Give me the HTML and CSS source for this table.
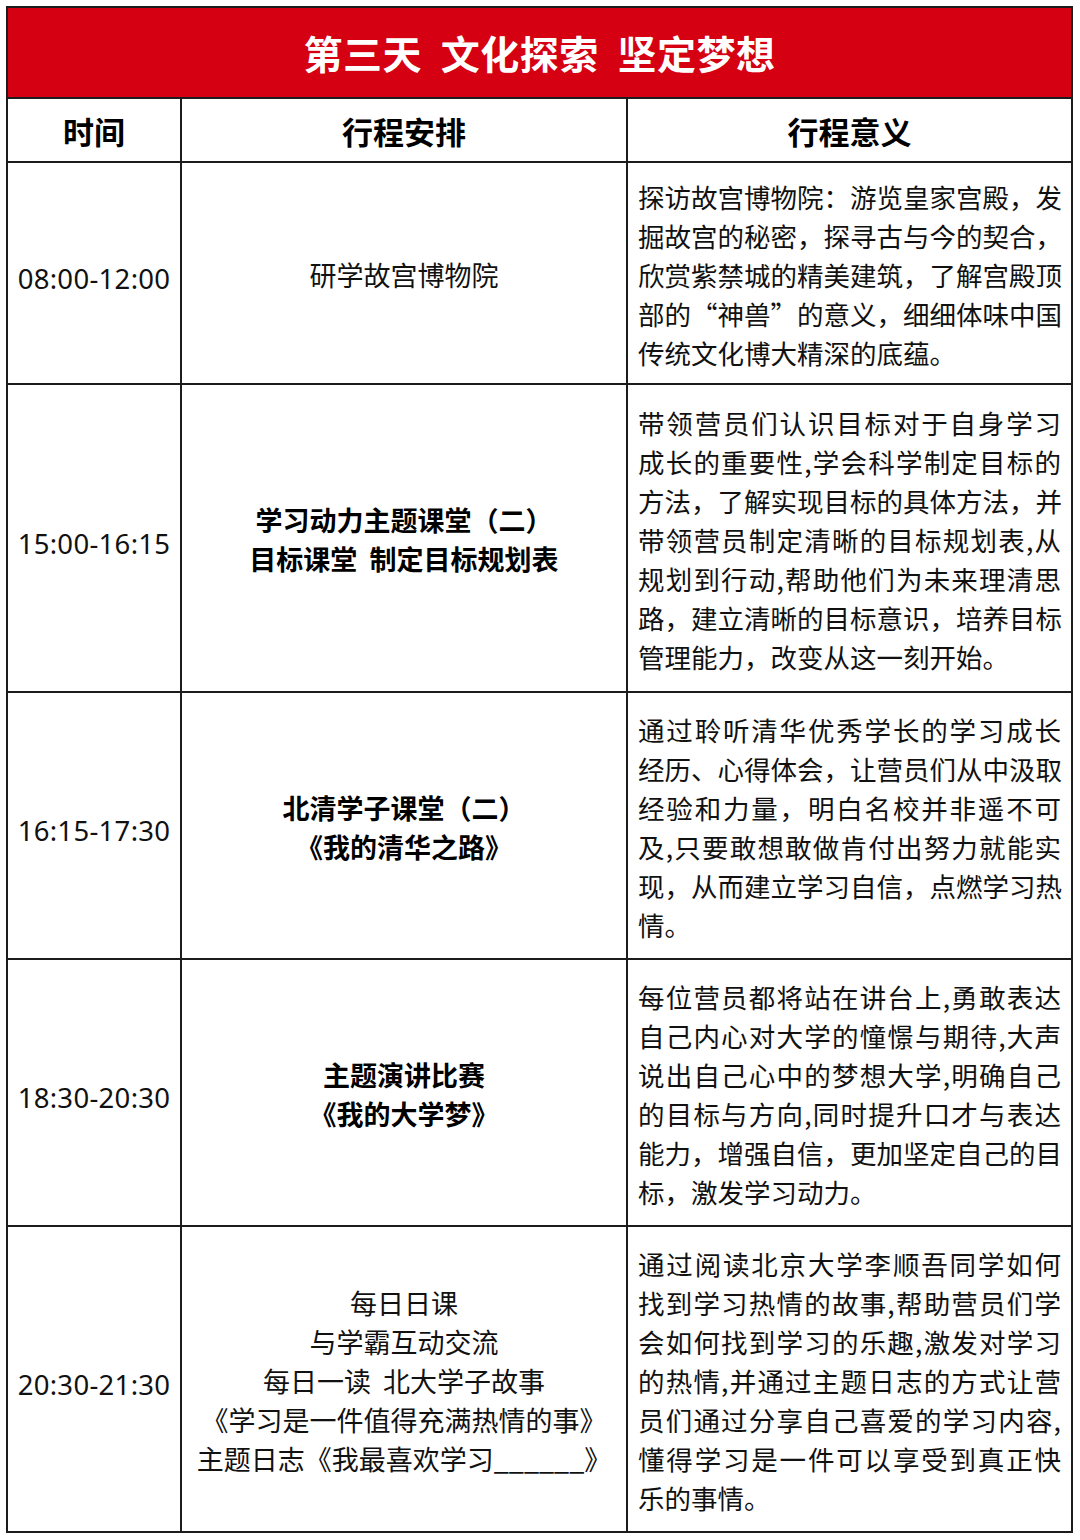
FILE: index.html
```html
<!DOCTYPE html>
<html lang="zh-CN">
<head>
<meta charset="utf-8">
<title>第三天 文化探索 坚定梦想</title>
<link rel="stylesheet" href="styles.css">
</head>
<body>
<div class="schedule">
  <div class="title">第三天&nbsp;&nbsp;文化探索&nbsp;&nbsp;坚定梦想</div>

  <div class="head">时间</div>
  <div class="head">行程安排</div>
  <div class="head">行程意义</div>

  <div class="time">08:00-12:00</div>
  <div class="plan">研学故宫博物院</div>
  <div class="meaning">
    <span class="ln">探访故宫博物院：游览皇家宫殿，发</span>
    <span class="ln">掘故宫的秘密，探寻古与今的契合，</span>
    <span class="ln">欣赏紫禁城的精美建筑，了解宫殿顶</span>
    <span class="ln">部的“神兽”的意义，细细体味中国</span>
    <span class="ln">传统文化博大精深的底蕴。</span>
  </div>

  <div class="time">15:00-16:15</div>
  <div class="plan bold">学习动力主题课堂（二）<br>目标课堂&nbsp;&nbsp;制定目标规划表</div>
  <div class="meaning">
    <span class="ln">带领营员们认识目标对于自身学习</span>
    <span class="ln">成长的重要性,学会科学制定目标的</span>
    <span class="ln">方法，了解实现目标的具体方法，并</span>
    <span class="ln">带领营员制定清晰的目标规划表,从</span>
    <span class="ln">规划到行动,帮助他们为未来理清思</span>
    <span class="ln">路，建立清晰的目标意识，培养目标</span>
    <span class="ln">管理能力，改变从这一刻开始。</span>
  </div>

  <div class="time">16:15-17:30</div>
  <div class="plan bold">北清学子课堂（二）<br>《我的清华之路》</div>
  <div class="meaning">
    <span class="ln">通过聆听清华优秀学长的学习成长</span>
    <span class="ln">经历、心得体会，让营员们从中汲取</span>
    <span class="ln">经验和力量，明白名校并非遥不可</span>
    <span class="ln">及,只要敢想敢做肯付出努力就能实</span>
    <span class="ln">现，从而建立学习自信，点燃学习热</span>
    <span class="ln">情。</span>
  </div>

  <div class="time">18:30-20:30</div>
  <div class="plan bold">主题演讲比赛<br>《我的大学梦》</div>
  <div class="meaning">
    <span class="ln">每位营员都将站在讲台上,勇敢表达</span>
    <span class="ln">自己内心对大学的憧憬与期待,大声</span>
    <span class="ln">说出自己心中的梦想大学,明确自己</span>
    <span class="ln">的目标与方向,同时提升口才与表达</span>
    <span class="ln">能力，增强自信，更加坚定自己的目</span>
    <span class="ln">标，激发学习动力。</span>
  </div>

  <div class="time">20:30-21:30</div>
  <div class="plan">每日日课<br>与学霸互动交流<br>每日一读&nbsp;&nbsp;北大学子故事<br>《学习是一件值得充满热情的事》<br>主题日志《我最喜欢学习______》</div>
  <div class="meaning">
    <span class="ln">通过阅读北京大学李顺吾同学如何</span>
    <span class="ln">找到学习热情的故事,帮助营员们学</span>
    <span class="ln">会如何找到学习的乐趣,激发对学习</span>
    <span class="ln">的热情,并通过主题日志的方式让营</span>
    <span class="ln">员们通过分享自己喜爱的学习内容,</span>
    <span class="ln">懂得学习是一件可以享受到真正快</span>
    <span class="ln">乐的事情。</span>
  </div>
</div>
</body>
</html>
```

FILE: styles.css
```css
* {
  box-sizing: border-box;
}

html, body {
  background: #ffffff;
}

body {
  margin: 6px 0 0 6px;
  font-family: "Noto Sans CJK SC", "Noto Sans", sans-serif;
  color: #111111;
}

.schedule {
  width: 1067px;
  display: grid;
  grid-template-columns: 172px 444px 443px;
  grid-template-rows: 89px 62px 220px 306px 265px 265px 304px;
  gap: 2px;
  padding: 2px;
  background: #1c1c1c;
}

.schedule > div {
  background: #ffffff;
  display: flex;
  align-items: center;
}

.schedule > .title {
  grid-column: 1 / -1;
  background: #d50012;
  color: #ffffff;
  justify-content: center;
  font-size: 39px;
  font-weight: 700;
  letter-spacing: 0.5px;
  padding-bottom: 2px;
}

.schedule > .head {
  justify-content: center;
  font-size: 31px;
  font-weight: 700;
  color: #000000;
  padding-top: 1px;
}

.schedule > .time {
  justify-content: center;
  font-family: "Noto Sans", "Open Sans", sans-serif;
  font-size: 27.5px;
  letter-spacing: 0.3px;
  padding-top: 10px;
}

.schedule > .plan {
  justify-content: center;
  text-align: center;
  font-size: 27px;
  line-height: 39px;
  padding-top: 2px;
}

.schedule > .plan.bold {
  font-weight: 700;
  color: #000000;
  font-size: 27px;
}

.schedule > .meaning {
  flex-direction: column;
  align-items: stretch;
  justify-content: center;
  padding: 2px 10px 0 10px;
  font-size: 26.5px;
  line-height: 39px;
}

.ln {
  display: block;
  text-align: justify;
  text-align-last: justify;
  white-space: nowrap;
}

.ln:last-child {
  text-align-last: left;
}
```
